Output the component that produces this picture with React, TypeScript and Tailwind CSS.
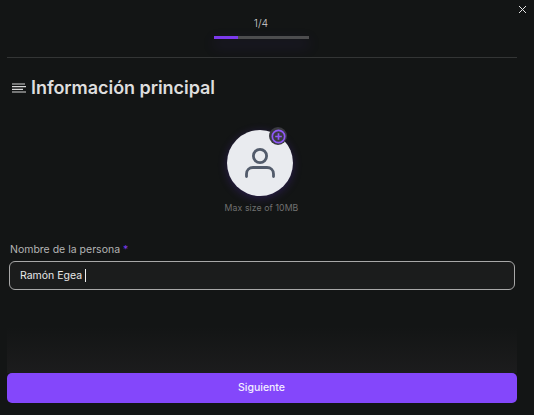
import React from "react";

export default function App() {
  return (
    <div className="relative flex h-[415px] w-[534px] flex-col overflow-hidden bg-[#131515] font-['Inter',sans-serif]">
      <button className="absolute right-[7px] top-[5px] text-[#e5e5e5]">
        <svg width="9" height="9" viewBox="0 0 9 9" fill="none" stroke="currentColor" strokeWidth="1">
          <path d="M1 1L8 8M8 1L1 8" />
        </svg>
      </button>

      <div className="ml-[7px] mr-[17px] flex h-[58px] flex-col items-center border-b border-[#333535] pr-[2px] pt-[16px]">
        <div className="h-[15px] text-[10.5px] font-light leading-[15px] text-[#d0d0d0]">1/4</div>
        <div className="mt-[5px] h-[3px] w-[95px] bg-[#4d4d4f] shadow-[0_6px_14px_rgba(96,50,210,0.28)]">
          <div className="h-full w-[24px] bg-[#7c3aed]" />
        </div>
      </div>

      <div className="ml-[12px] mt-[18px] flex h-[24px] items-center gap-[5px]">
        <svg width="14" height="10" viewBox="0 0 14 10" stroke="#d8d8d8" strokeWidth="1.2" fill="none">
          <path d="M0 1H13M0 3.7H14M0 6.3H11M0 9H14" />
        </svg>
        <h1 className="text-[18px] font-semibold leading-[24px] tracking-[-0.05px] text-[#dedede]">Información principal</h1>
      </div>

      <div className="mt-[30px] flex flex-col items-center pr-[14px]">
        <div className="relative flex h-[66px] w-[66px] items-center justify-center rounded-full bg-[#e9ebef] shadow-[0_2px_10px_rgba(96,50,210,0.3)]">
          <svg width="30" height="32" viewBox="0 0 30 32" fill="none" stroke="#525b6b" strokeWidth="2.8">
            <circle cx="15" cy="9" r="6.6" />
            <path d="M1.5 29.5V27C1.5 23 4.5 20.5 8 20.5H22C25.5 20.5 28.5 23 28.5 27V29.5" strokeLinecap="round" />
          </svg>
          <div className="absolute right-[6px] top-[-3px] flex h-[18px] w-[18px] items-center justify-center rounded-full bg-[#3a3a40]">
            <svg width="15" height="15" viewBox="0 0 15 15" fill="none" stroke="#8f58f8" strokeWidth="1.7">
              <circle cx="7.5" cy="7.5" r="6.2" />
              <path d="M7.5 4.2V10.8M4.2 7.5H10.8" />
            </svg>
          </div>
        </div>
        <p className="mt-[5px] h-[14px] pl-[3px] text-[8.7px] leading-[14px] tracking-[0.1px] text-[#707070]">Max size of 10MB</p>
      </div>

      <div className="ml-[9px] mr-[19px] mt-[27px] flex flex-col">
        <label className="h-[16px] pl-[1px] text-[10.5px] leading-[16px] text-[#b4b4b4]">
          Nombre de la persona <span className="text-[#7c3aed]">*</span>
        </label>
        <div className="mt-[3px] flex h-[29px] items-center rounded-[6px] border border-[#a8a8a8] bg-[#1b1c1c] px-[10px]">
          <span className="text-[10.5px] leading-[16px] text-[#e8e8e8]">Ramón Egea</span>
          <span className="ml-[3px] h-[13px] w-px bg-[#f0f0f0]" />
        </div>
      </div>

      <div className="ml-[7px] mr-[17px] mt-[37px] h-[46px] bg-gradient-to-b from-[#131515] to-[#1c1c1d]" />
      <button className="ml-[7px] mr-[17px] flex h-[30px] items-center justify-center rounded-[5px] bg-[#8447fb] pr-[1px] text-[10.5px] font-medium text-[#f3eeff]">
        Siguiente
      </button>
    </div>
  );
}
